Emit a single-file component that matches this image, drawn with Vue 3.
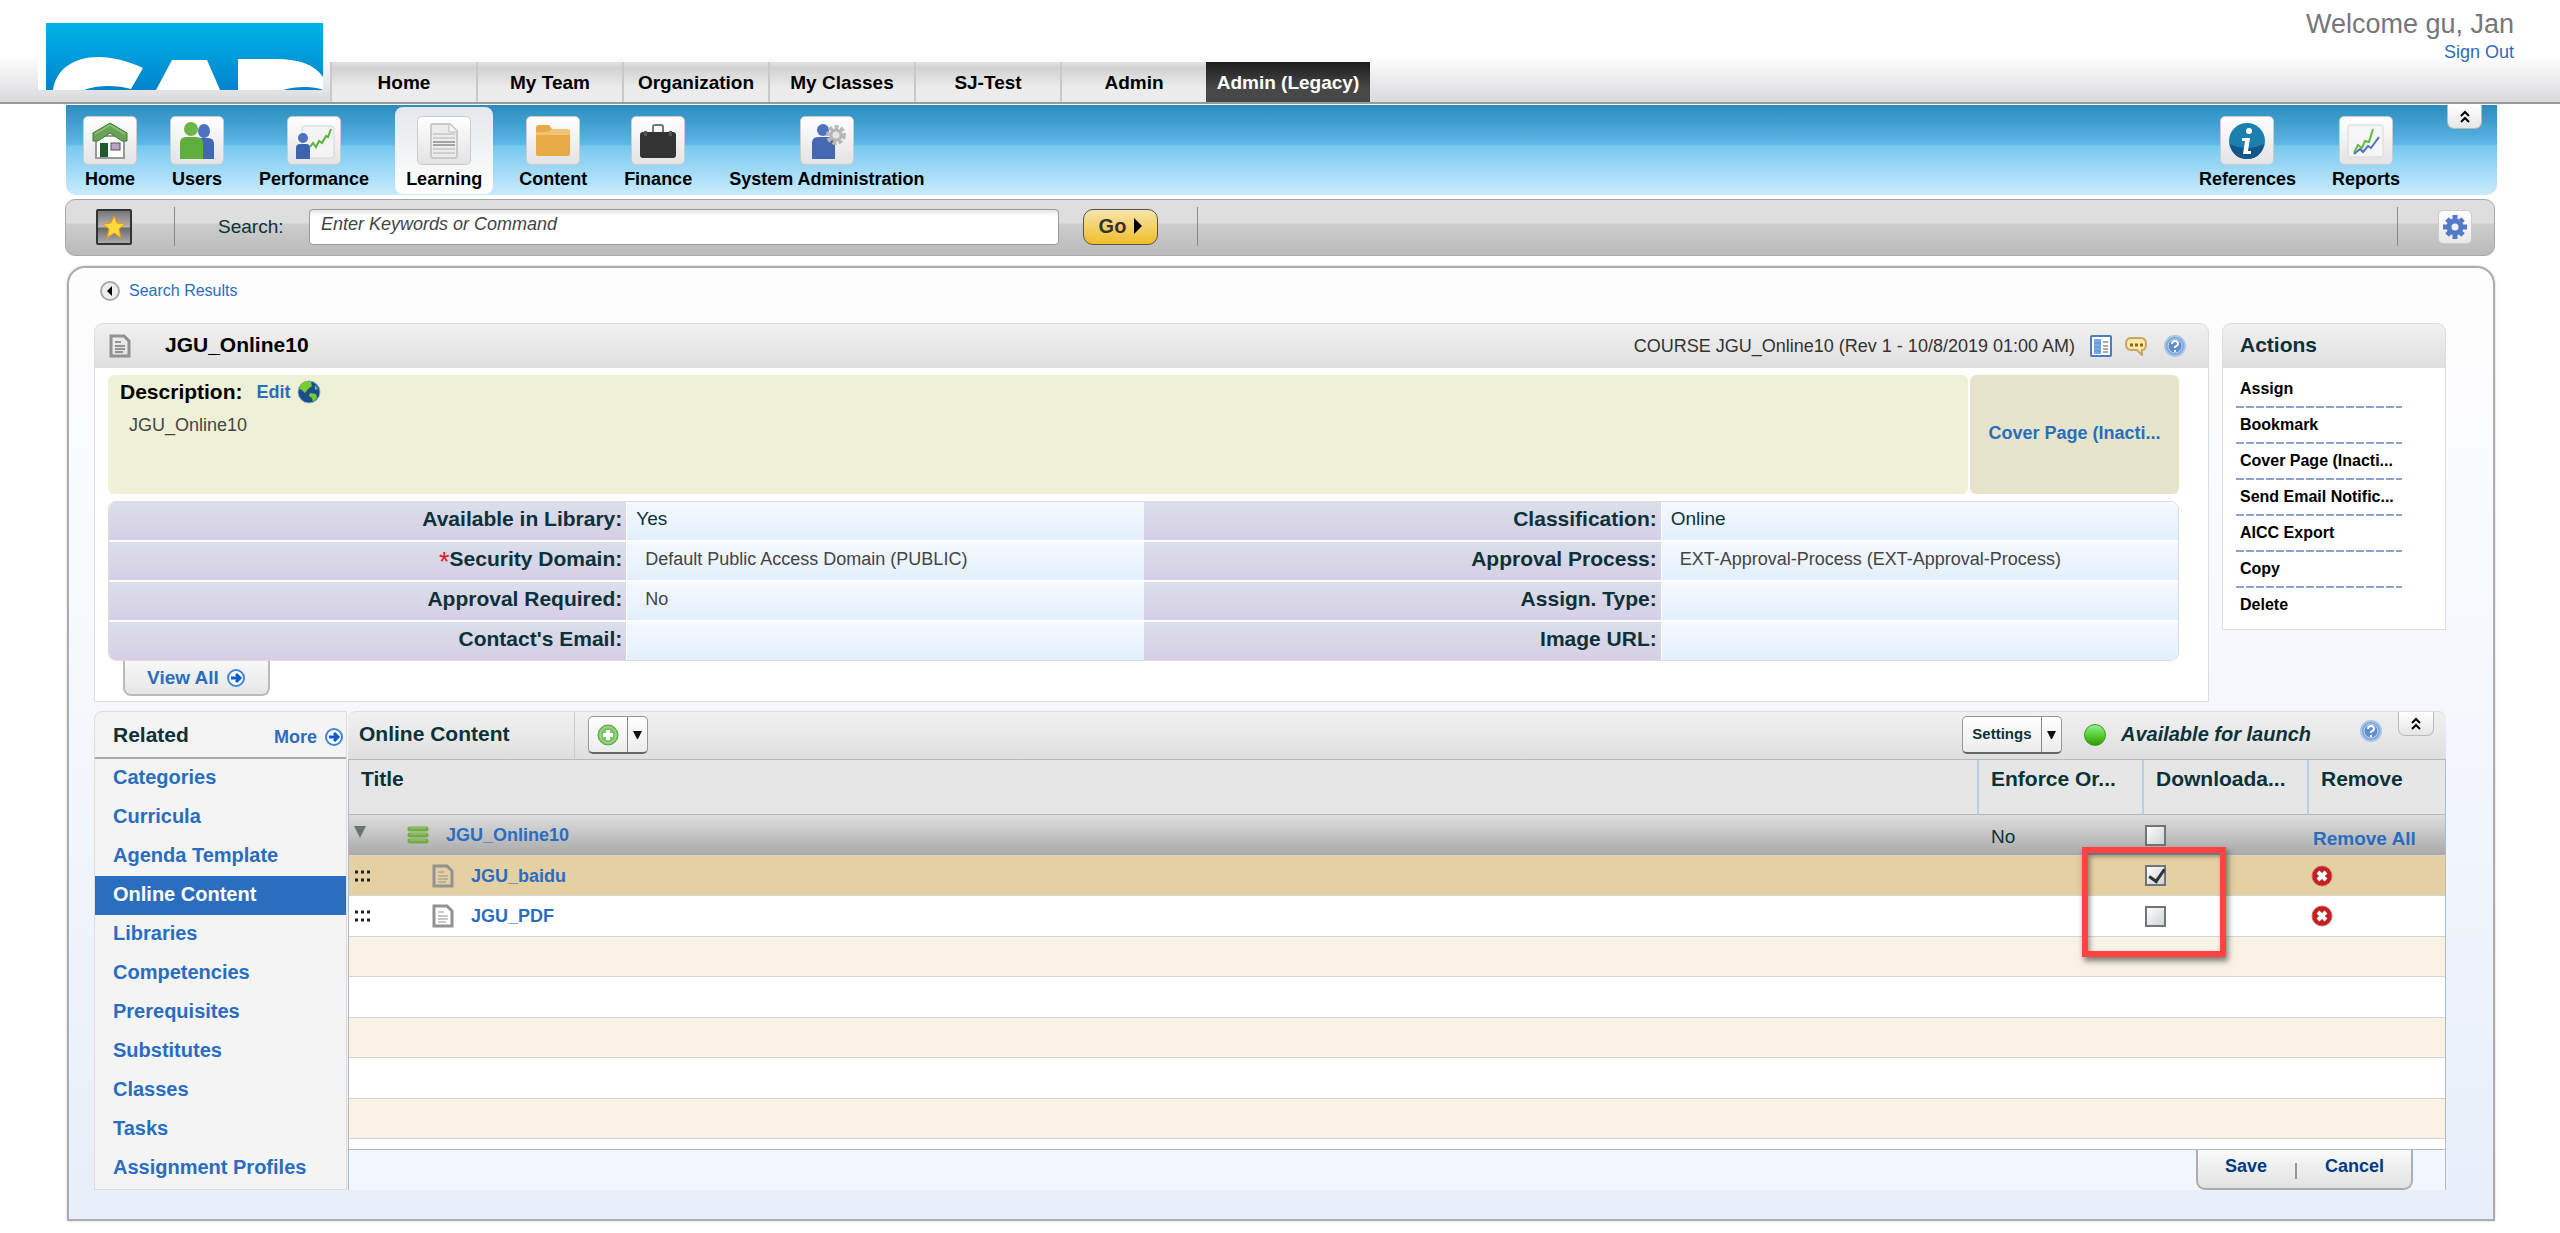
<script setup>
import { ref } from 'vue'

const tabs = ['Home', 'My Team', 'Organization', 'My Classes', 'SJ-Test', 'Admin', 'Admin (Legacy)']
const modules = ['Home', 'Users', 'Performance', 'Learning', 'Content', 'Finance', 'System Administration']
const tools = ['References', 'Reports']
const keywords = ref('')

const fields = [
  { label: 'Available in Library', value: 'Yes', strong: true },
  { label: 'Classification', value: 'Online', strong: true },
  { label: 'Security Domain', value: 'Default Public Access Domain (PUBLIC)', required: true },
  { label: 'Approval Process', value: 'EXT-Approval-Process (EXT-Approval-Process)' },
  { label: 'Approval Required', value: 'No' },
  { label: 'Assign. Type', value: '' },
  { label: "Contact's Email", value: '' },
  { label: 'Image URL', value: '' }
]

const actions = ['Assign', 'Bookmark', 'Cover Page (Inacti...', 'Send Email Notific...', 'AICC Export', 'Copy', 'Delete']

const related = [
  'Categories', 'Curricula', 'Agenda Template', 'Online Content', 'Libraries', 'Competencies',
  'Prerequisites', 'Substitutes', 'Classes', 'Tasks', 'Assignment Profiles'
]

const allDownloadable = ref(false)
const items = ref([
  { title: 'JGU_baidu', downloadable: true },
  { title: 'JGU_PDF', downloadable: false }
])
</script>

<template>
  <div class="page">
    <header class="top">
      <svg class="logo" viewBox="0 0 285 75" role="img" aria-label="Company logo">
        <defs>
          <linearGradient id="logoBlue" x1="0" y1="0" x2="0" y2="1">
            <stop offset="0" stop-color="#00b4e9" />
            <stop offset="1" stop-color="#0083cb" />
          </linearGradient>
        </defs>
        <rect width="285" height="75" fill="#fff" />
        <rect x="8" y="8" width="277" height="67" fill="url(#logoBlue)" />
        <path d="M15 75C18 54 36 42 60 42c17 0 32 5 45 11L93 74c-14-4-34-4-47 1z" fill="#fff" />
        <path d="M118 75 134 45h35l13 30z" fill="#fff" />
        <path d="M200 75V44h38c24 0 39 6 47 18v13c-8-4-28-4-40 0z" fill="#fff" />
      </svg>
      <nav class="tabs" aria-label="Sites">
        <a v-for="t in tabs" :key="t" href="#" class="tab" :class="{ current: t === 'Admin (Legacy)' }">{{ t }}</a>
      </nav>
      <div class="user">
        <div class="welcome">Welcome gu, Jan</div>
        <a href="#" class="link">Sign Out</a>
      </div>
    </header>

    <nav class="modules" aria-label="Modules">
      <a v-for="m in modules" :key="m" href="#" class="module" :class="{ active: m === 'Learning' }">
        <span class="tile">
          <svg v-if="m === 'Home'" width="38" height="38" viewBox="0 0 38 38">
            <rect x="5" y="14" width="28" height="22" fill="#fdfdfd" stroke="#999" stroke-width="2" />
            <path d="M19 1 36 11v8h-5l-12-8-12 8H2v-8z" fill="#6aa355" stroke="#3f7a33" stroke-width="1" />
            <path d="M19 3 34 12M19 3 4 12" stroke="#8abf72" stroke-width="2" />
            <rect x="9" y="21" width="8" height="14" fill="#1f5a2e" />
            <rect x="20" y="21" width="9" height="7" fill="#b9a3c4" stroke="#555" stroke-width="1" />
          </svg>
          <svg v-else-if="m === 'Users'" width="38" height="38" viewBox="0 0 38 38">
            <ellipse cx="26" cy="9" rx="6" ry="7" fill="#4d72c2" />
            <path d="M17 37V21q0-5 5-5h8q6 0 6 6v15z" fill="#4267b3" />
            <ellipse cx="13" cy="7" rx="7" ry="7" fill="#6cb54a" />
            <path d="M2 37V21q0-6 6-6h10q7 0 7 6v16z" fill="#5fae3e" />
          </svg>
          <svg v-else-if="m === 'Performance'" width="42" height="38" viewBox="0 0 42 38">
            <rect x="9" y="4" width="32" height="32" rx="3" fill="#f4f4f4" stroke="#d6d6d6" />
            <circle cx="10" cy="16" r="5" fill="#4d72c2" />
            <path d="M3 37V26q0-4 4-4h6q4 0 4 4v11z" fill="#3f62ad" />
            <path d="m17 25 3-4 3 4 3-6 3 2 4-7 2 1 3-8" fill="none" stroke="#56b53a" stroke-width="2" />
          </svg>
          <svg v-else-if="m === 'Learning'" width="30" height="38" viewBox="0 0 30 38">
            <path d="M3 2h18l7 7v25q0 2-2 2H4q-2 0-2-2V4q0-2 1-2z" fill="#ececec" stroke="#cacaca" stroke-width="2" />
            <path d="M20 2v8h8" fill="#fafafa" stroke="#bbb" />
            <path d="M4 12h22M4 16h22M4 20h22M4 23h22M4 27h22M4 31h22" stroke="#b2b2b2" stroke-width="1" />
            <path d="M4 20h22M4 23h22" stroke="#a5a5a5" stroke-width="2" />
          </svg>
          <svg v-else-if="m === 'Content'" width="36" height="34" viewBox="0 0 36 34">
            <path d="M1 4q0-3 3-3h10l3 4h15q3 0 3 3v22q0 2-3 2H4q-3 0-3-2z" fill="#e8aa46" />
            <path d="M1 8h12l4-3h15q3 0 3 3v3H1z" fill="#f3c275" />
          </svg>
          <svg v-else-if="m === 'Finance'" width="38" height="38" viewBox="0 0 38 38">
            <path d="M14 10V5q0-2 2-2h6q2 0 2 2v5" fill="none" stroke="#777" stroke-width="2" />
            <rect x="1" y="10" width="36" height="26" rx="3" fill="#333" />
            <path d="M5 14v-5h3v5M30 14v-5h3v5" fill="#555" />
          </svg>
          <svg v-else width="38" height="38" viewBox="0 0 38 38">
            <circle cx="15" cy="8" r="6" fill="#4d72c2" />
            <path d="M4 37V21q0-6 6-6h10q7 0 7 6v16z" fill="#4468b4" />
            <circle cx="28" cy="13" r="8" fill="none" stroke="#b9b9b9" stroke-width="4" stroke-dasharray="4 2" />
            <circle cx="28" cy="13" r="5" fill="#e6e6e6" stroke="#b5b5b5" stroke-width="3" />
          </svg>
        </span>
        <span>{{ m }}</span>
      </a>
      <div class="tools">
        <a v-for="t in tools" :key="t" href="#" class="module">
          <span class="tile">
            <svg v-if="t === 'References'" width="38" height="38" viewBox="0 0 38 38">
              <circle cx="19" cy="19" r="18" fill="#1b7fb0" />
              <path d="M2 22q17 8 34 0-3 15-17 15T2 22z" fill="#13578a" />
              <circle cx="21" cy="9" r="3" fill="#fff" />
              <path d="M14 16h8l-2 13h3v3h-8l2-13h-3z" fill="#fff" />
            </svg>
            <svg v-else width="38" height="38" viewBox="0 0 38 38">
              <rect x="1" y="3" width="35" height="32" rx="2" fill="#f6f6f6" stroke="#d8d8d8" />
              <path d="m7 32 6-5 3 3 5-6 3 2 8-11" fill="none" stroke="#4d6fc0" stroke-width="2" />
              <path d="m7 31 4-8 4 3 3-7 4 1 4-13" fill="none" stroke="#61b944" stroke-width="2" />
            </svg>
          </span>
          <span>{{ t }}</span>
        </a>
      </div>
      <button class="collapse" aria-label="Collapse menu">
        <svg width="12" height="14" viewBox="0 0 12 14"><path d="m2 6 4-4 4 4M2 12l4-4 4 4" fill="none" stroke="#000" stroke-width="2" /></svg>
      </button>
    </nav>

    <form class="search" @submit.prevent>
      <button type="button" class="star" aria-label="Favorites">
        <svg width="26" height="26" viewBox="0 0 26 26"><path d="m13 2 3 7 8 1-6 5 2 9-7-5-7 5 2-9-6-5 8-1z" fill="#ffd93b" stroke="#f0920f" stroke-width="1" /></svg>
      </button>
      <span class="rule"></span>
      <label for="keywords">Search:</label>
      <input id="keywords" v-model="keywords" type="text" placeholder="Enter Keywords or Command" />
      <button class="go">Go<svg width="8" height="16" viewBox="0 0 8 16"><path d="M0 0v16l8-8z" fill="#000" /></svg></button>
      <span class="rule"></span>
      <span class="rule last"></span>
      <button type="button" class="gear" aria-label="Preferences">
        <svg width="26" height="26" viewBox="0 0 26 26">
          <path d="M13 1v24M1 13h24M5 5l16 16M21 5 5 21" stroke="#5479c6" stroke-width="5" />
          <circle cx="13" cy="13" r="6" fill="#f3f3f3" stroke="#5479c6" stroke-width="5" />
        </svg>
      </button>
    </form>

    <main class="panel">
      <a href="#" class="back link">
        <svg width="20" height="20" viewBox="0 0 20 20"><circle cx="10" cy="10" r="9" fill="#eee" stroke="#aaa" stroke-width="2" /><path d="M12 5v10l-5-5z" fill="#000" /></svg>
        Search Results
      </a>

      <div class="summary">
        <section class="card">
          <div class="card-head">
            <svg width="22" height="24" viewBox="0 0 22 24"><path d="M2 2h13l5 5v15H2z" fill="none" stroke="#929292" stroke-width="3" /><path d="M6 8h6M6 12h10M6 15h10M6 18h8" stroke="#929292" stroke-width="2" /></svg>
            <h1>JGU_Online10</h1>
            <span class="revision">COURSE JGU_Online10 (Rev 1 - 10/8/2019 01:00 AM)</span>
            <button class="icon" aria-label="Details">
              <svg width="22" height="22" viewBox="0 0 22 22"><rect x="1" y="1" width="20" height="20" rx="1" fill="#fff" stroke="#4a7cc0" stroke-width="2" /><rect x="4" y="4" width="7" height="15" fill="#79a9e2" /><path d="M4 8h7M4 12h7M4 16h7" stroke="#5a90d4" stroke-width="1" /><path d="M13 7h5M13 11h5M13 14h5M13 17h5" stroke="#aaa" stroke-width="2" /></svg>
            </button>
            <button class="icon" aria-label="Comments">
              <svg width="22" height="20" viewBox="0 0 22 20"><path d="M6 2h10q5 0 5 6t-4 6v5l-5-5H6q-5 0-5-6t5-6z" fill="#fbe9a6" stroke="#c9a468" stroke-width="2" /><path d="M5 9h3M10 9h3M15 9h3" stroke="#94631c" stroke-width="3" /></svg>
            </button>
            <button class="icon help" aria-label="Help">
              <svg width="22" height="22" viewBox="0 0 22 22"><circle cx="11" cy="11" r="10" fill="#79a4d8" stroke="#a9c6e8" stroke-width="2" /><circle cx="11" cy="11" r="7" fill="#5d8fcb" stroke="#c6dbf2" /><path d="M8 9q0-3 3-3t3 3q0 1-3 3v1M11 15v2" fill="none" stroke="#fff" stroke-width="2" /></svg>
            </button>
          </div>
          <div class="card-body">
            <div class="intro">
              <div class="description">
                <div class="desc-line">
                  <h2>Description:</h2>
                  <a href="#" class="link bold">Edit</a>
                  <svg width="24" height="24" viewBox="0 0 24 24"><circle cx="12" cy="12" r="11" fill="#1c4e8c" stroke="#7fb0dc" /><path d="M4 4q5-4 10-2l1 4-4 3-3 4-3-3-3-1zM13 13l6 1 1 4-4 4-1-4-3-2zM18 5l3 4-3 1z" fill="#77cc2e" /></svg>
                </div>
                <p>JGU_Online10</p>
              </div>
              <div class="cover"><a href="#" class="link bold">Cover Page (Inacti...</a></div>
            </div>
            <dl class="fields">
              <template v-for="f in fields" :key="f.label">
                <dt><span v-if="f.required" class="star-mark">*</span>{{ f.label }}:</dt>
                <dd :class="{ strong: f.strong }">{{ f.value }}</dd>
              </template>
            </dl>
            <a href="#" class="view-all link bold">View All
              <svg width="20" height="20" viewBox="0 0 20 20"><circle cx="10" cy="10" r="8" fill="#fff" stroke="#3d85dd" stroke-width="2" /><path d="M5 10h8M10 6l4 4-4 4" fill="none" stroke="#0a5bd0" stroke-width="3" /></svg>
            </a>
          </div>
        </section>

        <aside class="actions">
          <div class="card-head"><h2>Actions</h2></div>
          <ul>
            <li v-for="(a, i) in actions" :key="a">
              <a href="#">{{ a }}</a>
              <svg v-if="i < actions.length - 1" width="166" height="2"><path d="M0 1h166" stroke="#8fa0d2" stroke-width="2" stroke-dasharray="8 2" /></svg>
            </li>
          </ul>
        </aside>
      </div>

      <div class="detail">
        <nav class="related" aria-label="Related">
          <div class="related-head">
            <h2>Related</h2>
            <a href="#" class="link bold">More
              <svg width="20" height="20" viewBox="0 0 20 20"><circle cx="10" cy="10" r="8" fill="#fff" stroke="#3d85dd" stroke-width="2" /><path d="M5 10h8M10 6l4 4-4 4" fill="none" stroke="#0a5bd0" stroke-width="3" /></svg>
            </a>
          </div>
          <a v-for="r in related" :key="r" href="#" class="related-item" :class="{ selected: r === 'Online Content' }">{{ r }}</a>
        </nav>

        <section class="content">
          <div class="toolbar">
            <h2>Online Content</h2>
            <div class="split">
              <button aria-label="Add content">
                <svg width="22" height="22" viewBox="0 0 22 22"><circle cx="11" cy="11" r="10" fill="#7cc368" stroke="#58a344" stroke-width="1" /><circle cx="11" cy="11" r="8" fill="none" stroke="#a9dc9b" /><path d="M11 6v10M6 11h10" stroke="#fff" stroke-width="4" /></svg>
              </button>
              <button class="caret" aria-label="Add options"><svg width="9" height="8" viewBox="0 0 9 8"><path d="M0 0h9L5 8H4z" fill="#111" /></svg></button>
            </div>
            <div class="split settings">
              <button>Settings</button>
              <button class="caret" aria-label="Settings options"><svg width="9" height="8" viewBox="0 0 9 8"><path d="M0 0h9L5 8H4z" fill="#111" /></svg></button>
            </div>
            <span class="dot"></span>
            <span class="status">Available for launch</span>
            <button class="icon raised" aria-label="Help">
              <svg width="22" height="22" viewBox="0 0 22 22"><circle cx="11" cy="11" r="10" fill="#79a4d8" stroke="#a9c6e8" stroke-width="2" /><circle cx="11" cy="11" r="7" fill="#5d8fcb" stroke="#c6dbf2" /><path d="M8 9q0-3 3-3t3 3q0 1-3 3v1M11 15v2" fill="none" stroke="#fff" stroke-width="2" /></svg>
            </button>
            <button class="collapse inline" aria-label="Collapse section">
              <svg width="12" height="14" viewBox="0 0 12 14"><path d="m2 6 4-4 4 4M2 12l4-4 4 4" fill="none" stroke="#000" stroke-width="2" /></svg>
            </button>
          </div>

          <div class="grid">
            <table>
              <colgroup><col /><col class="w-mid" /><col class="w-mid" /><col class="w-end" /></colgroup>
              <thead>
                <tr><th>Title</th><th>Enforce Or...</th><th>Downloada...</th><th>Remove</th></tr>
              </thead>
              <tbody>
                <tr class="group">
                  <td>
                    <div class="cell">
                      <svg class="toggle" width="12" height="12" viewBox="0 0 12 12"><path d="M0 0h12L6 12z" fill="#6b7672" /></svg>
                      <svg width="22" height="20" viewBox="0 0 22 20"><path d="M3 4h16M3 10h16M3 16h16" stroke="#74ab45" stroke-width="5" stroke-linecap="round" /><path d="M3 3h16M3 9h16M3 15h16" stroke="#a3cc77" stroke-width="1" /></svg>
                      <a href="#" class="link bold">JGU_Online10</a>
                    </div>
                  </td>
                  <td class="order">No</td>
                  <td class="check"><input v-model="allDownloadable" type="checkbox" aria-label="JGU_Online10 downloadable" /></td>
                  <td class="remove-all"><a href="#" class="link bold">Remove All</a></td>
                </tr>
                <tr v-for="(item, i) in items" :key="item.title" :class="{ picked: i === 0 }">
                  <td>
                    <div class="cell child">
                      <svg class="grip" width="18" height="14" viewBox="0 0 18 14"><path d="M3 3h3M9 3h3M15 3h3M3 11h3M9 11h3M15 11h3" stroke="#222" stroke-width="3" /></svg>
                      <svg width="22" height="24" viewBox="0 0 22 24"><path d="M2 2h13l5 5v15H2z" fill="none" stroke="#929292" stroke-width="3" /><path d="M6 8h6M6 12h10M6 15h10M6 18h8" stroke="#929292" stroke-width="1" /></svg>
                      <a href="#" class="link bold">{{ item.title }}</a>
                    </div>
                  </td>
                  <td></td>
                  <td class="check"><input v-model="item.downloadable" type="checkbox" :aria-label="item.title + ' downloadable'" /></td>
                  <td class="remove">
                    <button class="icon" :aria-label="'Remove ' + item.title">
                      <svg width="22" height="22" viewBox="0 0 22 22"><circle cx="11" cy="11" r="10" fill="#c31f22" stroke="#d96a6c" stroke-width="1" /><path d="m7 7 8 8M15 7l-8 8" stroke="#fff" stroke-width="4" /></svg>
                    </button>
                  </td>
                </tr>
                <tr v-for="n in 5" :key="n" :class="{ shade: n % 2 }"><td></td><td></td><td></td><td></td></tr>
              </tbody>
            </table>
            <div class="callout"></div>
          </div>

          <div class="foot">
            <div class="foot-tab">
              <button>Save</button>
              <span class="foot-rule"></span>
              <button>Cancel</button>
            </div>
          </div>
        </section>
      </div>
    </main>
  </div>
</template>

<style>
body { background: #fff; }
</style>

<style scoped>
* { box-sizing: border-box; }
.page {
  font-family: "Liberation Sans", Arial, sans-serif;
  font-size: 18px;
  line-height: 24px;
  color: #000;
  padding-bottom: 11px;
}
h1, h2, p, ul, dl, dd { margin: 0; padding: 0; }
h1, h2 { font-size: 21px; line-height: 24px; font-weight: bold; }
h2 { color: #0b3238; }
a { color: inherit; text-decoration: none; }
svg { display: block; flex: none; }
button { font: inherit; color: inherit; padding: 0; margin: 0; border: 0; background: none; display: flex; align-items: center; justify-content: center; }
.link { color: #2a6dc0; }
.bold { font-weight: bold; }

.top {
  display: flex;
  align-items: flex-end;
  height: 104px;
  border-bottom: 2px solid #9a989b;
  background: linear-gradient(#fff 55px, #d9dadc);
}
.logo { width: 285px; height: 75px; margin-left: 38px; align-self: flex-start; margin-top: 15px; }
.tabs { display: flex; margin-left: 7px; }
.tab {
  min-width: 146px;
  height: 40px;
  line-height: 42px;
  font-size: 19px;
  font-weight: bold;
  text-align: center;
  border-left: 2px solid #c9c9c9;
  background: linear-gradient(#e2e2e2, #d2d2d2 6px, #ececec 26px);
}
.tab.current { min-width: 164px; border-left: 0; color: #fff; background: linear-gradient(#1c1c1c, #484848 26px); }
.user { margin-left: auto; margin-right: 46px; align-self: flex-start; text-align: right; padding-top: 8px; }
.welcome { font-size: 27px; line-height: 32px; color: #777; }

.modules {
  position: relative;
  display: flex;
  gap: 15px;
  height: 90px;
  margin: 1px 63px 0 66px;
  padding: 2px 86px 1px 8px;
  border-radius: 0 0 10px 10px;
  background: linear-gradient(#2a8cbe, #5db6e6 39px, #77c9f1 41px, #c9ebfc);
}
.module {
  display: flex;
  flex-direction: column;
  align-items: center;
  padding: 9px 11px 0;
  border-radius: 8px;
  font-weight: bold;
  line-height: 29px;
}
.module.active { background: linear-gradient(#e4e7ec, #fff); }
.tile {
  display: flex;
  align-items: center;
  justify-content: center;
  width: 54px;
  height: 49px;
  margin: 0 -2px;
  border: 1px solid #ccc;
  border-radius: 5px;
  background: linear-gradient(#fff, #e3e3e5);
}
.tools { display: flex; gap: 14px; margin-left: auto; }
.collapse {
  position: absolute;
  top: 0;
  right: 15px;
  width: 35px;
  height: 24px;
  border: 1px solid #bbb;
  border-top: 0;
  border-radius: 0 0 7px 7px;
  background: linear-gradient(#fff, #e6e6e6);
}

.search {
  display: flex;
  align-items: center;
  height: 57px;
  margin: 4px 65px 0;
  padding: 0 22px 2px 30px;
  border: 1px solid #a8a8a8;
  border-radius: 10px;
  background: linear-gradient(#dedede 23px, #cdcdcd 24px, #bababa);
}
.star { width: 36px; height: 36px; border: 2px solid #333; border-radius: 2px; background: linear-gradient(#777, #b5b5b5 16px, #6a6a6a 17px, #aaa); }
.rule { width: 1px; height: 39px; background: #8a8a8a; margin-left: 42px; }
.go + .rule { margin-left: 39px; }
.rule.last { margin-left: auto; }
.search label { font-size: 19px; color: #0b3238; margin-left: 43px; width: 91px; }
.search input {
  width: 750px;
  height: 36px;
  border: 1px solid #999;
  border-radius: 4px;
  padding: 0 11px 4px;
  font: 18px "Liberation Sans", Arial, sans-serif;
  background: linear-gradient(#e4e4e4, #fff 6px);
}
.search input::placeholder { color: #444; font-style: italic; opacity: 1; }
.go {
  gap: 8px;
  width: 75px;
  height: 36px;
  margin-left: 24px;
  padding-bottom: 2px;
  border: 1px solid #555;
  border-radius: 10px;
  font-size: 20px;
  font-weight: bold;
  color: #333;
  background: linear-gradient(#f9e5ad, #efbe28);
}
.gear { width: 34px; height: 34px; margin-left: 40px; border: 1px solid #ccc; border-radius: 5px; background: linear-gradient(#fff, #e8e8e8); }

.panel {
  margin: 10px 65px 0 67px;
  padding: 13px 47px 29px 25px;
  border: 2px solid #adadad;
  border-radius: 18px 18px 0 0;
  background: linear-gradient(#fefefe, #fdfdfe 60px, #e8effa);
  box-shadow: 0 0 2px #bbb;
}
.back { display: inline-flex; align-items: center; gap: 9px; height: 20px; margin: 0 0 22px 6px; font-size: 16px; vertical-align: top; }
.summary { display: flex; gap: 13px; align-items: flex-start; }
.card { flex: 1; }
.card-head {
  display: flex;
  align-items: center;
  height: 45px;
  border: 1px solid #ddd;
  border-bottom: 0;
  border-radius: 9px 9px 0 0;
  padding: 0 22px 0 14px;
  background: linear-gradient(#f1f1f1, #dfdfdf);
}
.card-head h1, .card-head h2 { padding-bottom: 2px; }
.card-head h1 { margin-left: 34px; }
.revision { margin-left: auto; margin-right: 15px; color: #333; }
.icon + .icon { margin-left: 13px; }
.icon + .help { margin-left: 17px; }
.card-body { display: flow-root; padding: 7px 29px 5px 13px; border: 1px solid #ddd; border-top: 0; background: #fff; }
.intro { display: flex; gap: 2px; height: 119px; }
.description { flex: 1; border-radius: 6px; padding: 5px 12px; background: #eef1d6; }
.desc-line { display: flex; align-items: center; gap: 6px; }
.desc-line h2 { color: #000; margin-right: 8px; }
.description p { margin: 9px 9px 0; color: #444; }
.cover { display: flex; align-items: center; justify-content: center; width: 209px; padding-bottom: 4px; border-radius: 6px; background: #e6e5cb; }
.fields {
  display: grid;
  grid-template-columns: repeat(4, 1fr);
  grid-auto-rows: 38px;
  row-gap: 2px;
  margin-top: 7px;
  border: 1px solid #ddd;
  border-radius: 8px;
  overflow: hidden;
}
.fields dt, .fields dd { line-height: 34px; }
.fields dt { text-align: right; padding-right: 4px; font-size: 21px; font-weight: bold; color: #0b3238; background: linear-gradient(#dadfeb, #d7cee5); }
.fields dd { padding-left: 18px; border-left: 1px solid #fff; color: #444; background: linear-gradient(#f6f9fe, #e2effc); }
.fields dd.strong { padding-left: 9px; font-size: 19px; color: #0b3238; }
.star-mark { color: #d22; font-size: 27px; line-height: 20px; font-weight: normal; vertical-align: -5px; }
.view-all {
  display: flex;
  align-items: center;
  justify-content: center;
  gap: 7px;
  width: 147px;
  height: 35px;
  margin-left: 15px;
  border: 2px solid #bbb;
  border-top: 0;
  border-radius: 0 0 8px 8px;
  font-size: 19px;
  background: linear-gradient(#f8f8f8, #e6e6e6);
}

.actions { width: 224px; }
.actions .card-head { padding-left: 17px; }
.actions ul { list-style: none; height: 262px; padding: 4px 13px; border: 1px solid #ddd; border-top: 0; background: #fff; }
.actions li { height: 36px; font-size: 16px; font-weight: bold; }
.actions li a { display: block; line-height: 34px; padding-left: 4px; }

.detail { display: flex; margin-top: 9px; }
.related { width: 253px; border: 1px solid #ddd; background: #f4f4f4; border-radius: 8px 0 0; }
.related-head { display: flex; align-items: center; justify-content: space-between; height: 47px; padding: 0 2px 0 18px; border-bottom: 2px solid #aaa; }
.related-head a { display: flex; align-items: center; gap: 7px; padding-top: 4px; }
.related-item { display: block; height: 39px; line-height: 37px; padding-left: 18px; font-size: 20px; font-weight: bold; color: #2a6dc0; }
.related-item.selected { background: #2b6dbe; color: #fff; }

.content { flex: 1; margin-left: 1px; }
.toolbar { display: flex; align-items: center; height: 48px; padding: 0 12px 1px 11px; border-top: 1px solid #ddd; border-radius: 8px 8px 0 0; background: linear-gradient(#f1f1f1, #dfdfdf); }
.toolbar h2 { width: 216px; height: 46px; line-height: 43px; border-right: 1px solid #ccc; }
.split { display: flex; height: 38px; margin-left: 13px; border: 1px solid #999; border-bottom: 2px solid #666; border-radius: 5px; background: linear-gradient(#fff, #ececec); }
.split button { width: 38px; font-size: 15px; font-weight: bold; color: #0b3238; }
.split .caret { width: 20px; border-left: 1px solid #888; }
.settings { margin-left: auto; }
.settings button:first-child { width: 78px; padding-bottom: 2px; }
.dot { width: 22px; height: 22px; margin: 0 15px 0 22px; border: 1px solid #3e9c1a; border-radius: 50%; background: linear-gradient(#8df09a, #55cc2c 11px, #2f9a08); }
.status { font-size: 20px; font-weight: bold; font-style: italic; color: #0b3238; margin-right: 49px; padding-bottom: 3px; }
.raised { padding-bottom: 8px; }
.collapse.inline { position: static; align-self: flex-start; margin-left: 16px; width: 36px; }

.grid { position: relative; height: 391px; border: 1px solid #b5b8bd; background: #fff; }
table { width: 100%; table-layout: fixed; border-collapse: separate; border-spacing: 0; }
.w-mid { width: 165px; }
.w-end { width: 138px; }
th { height: 55px; padding: 7px 12px; vertical-align: top; text-align: left; font-size: 21px; line-height: 24px; color: #0b3238; background: #e6e6e6; border-bottom: 1px solid #b5b8bd; }
th + th { border-left: 2px solid #b8cfea; }
td { height: 40px; padding: 0; border-bottom: 1px solid #d5d5d5; }
tr:nth-child(odd) td { height: 41px; }
.group td { background: linear-gradient(#dedede, #a9a9a9); }
.picked td { background: #e5d0a3; }
.shade td { background: #faf2e4; }
.cell { display: flex; align-items: center; gap: 17px; padding-left: 5px; }
.toggle { margin-right: 24px; margin-bottom: 6px; }
.child .grip { margin-right: 45px; }
.cell.child { padding-left: 3px; }
td.order { padding: 4px 0 0 14px; font-size: 19px; color: #0b3238; }
td.check { padding-left: 3px; }
.check input {
  appearance: none;
  display: block;
  position: relative;
  width: 21px;
  height: 21px;
  margin: 0;
  border: 2px solid #70757a;
  background: linear-gradient(135deg, #fdfdfd, #d2d2d2);
}
.check input:checked::after {
  content: "";
  position: absolute;
  left: 5px;
  top: -1px;
  width: 7px;
  height: 13px;
  border: solid #2c333a;
  border-width: 0 3px 3px 0;
  transform: rotate(35deg);
}
td.remove-all { padding: 8px 0 0 6px; font-size: 19px; }
td.remove { padding-left: 4px; }
.callout { position: absolute; top: 87px; right: 219px; width: 144px; height: 110px; border: 6px solid #ff4343; box-shadow: 2px 4px 6px rgba(0, 0, 0, 0.5), inset 2px 3px 5px rgba(0, 0, 0, 0.4); }

.foot { display: flex; justify-content: flex-end; height: 40px; padding-right: 32px; border: solid #b5b8bd; border-width: 0 1px; background: #f2f7ff; }
.foot-tab { display: flex; justify-content: center; width: 217px; height: 40px; border: 2px solid #adadad; border-top: 0; border-radius: 0 0 9px 9px; background: linear-gradient(#fafafa, #e2e2e2); }
.foot-tab button { height: 32px; font-weight: bold; color: #003a85; }
.foot-rule { width: 2px; height: 16px; margin: 13px 28px 0; background: #999; }
</style>
